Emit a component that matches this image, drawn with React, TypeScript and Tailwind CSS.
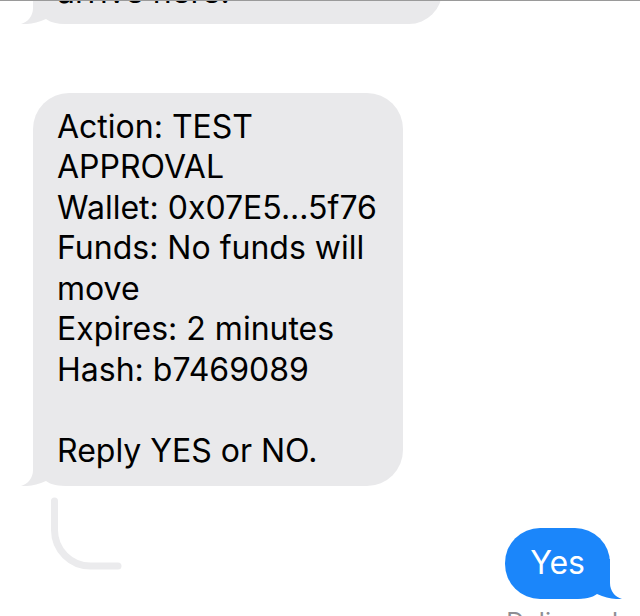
import type { ReactNode } from 'react';

const lines = [
  'Action: TEST',
  'APPROVAL',
  'Wallet: 0x07E5...5f76',
  'Funds: No funds will',
  'move',
  'Expires: 2 minutes',
  'Hash: b7469089',
  '',
  'Reply YES or NO.',
];

function Tail({ color, flip }: { color: string; flip?: boolean }) {
  return (
    <svg
      viewBox="0 0 50 40"
      width={50}
      height={40}
      className={flip ? 'absolute -right-[13px] bottom-0 -scale-x-100' : 'absolute -left-[13px] bottom-0'}
    >
      <path d="M13 0 V24 C13 32 8 38 1 40 C9 40.5 17 39 26 35 C31 39 38 40 50 40 V0 Z" fill={color} />
    </svg>
  );
}

function Received({ children, className }: { children: ReactNode; className?: string }) {
  return (
    <div className={`relative rounded-[36px] bg-[#e9e9eb] pl-6 pr-4 text-[32px] leading-[40.5px] text-black ${className ?? ''}`}>
      <Tail color="#e9e9eb" />
      <div className="relative">{children}</div>
    </div>
  );
}

export default function App() {
  return (
    <div className="flex h-[616px] w-[640px] flex-col overflow-hidden border-t border-[#9a9a9a] bg-white font-['Inter','Noto_Sans',sans-serif]">
      <Received className="-mt-[43px] ml-[33px] w-[409px] pt-[14px] pb-[11px]">
        <div className="whitespace-nowrap">arrive here.</div>
      </Received>

      <div className="relative ml-[33px] mt-[69px] w-[370px]">
        <Received className="pt-[14px] pb-[15px]">
          {lines.map((line, i) => (
            <div key={i} className="h-[40.5px] whitespace-nowrap">
              {line}
            </div>
          ))}
        </Received>
        <svg width={130} height={90} className="absolute left-[-33px] top-full">
          <path
            d="M54.5 15 V44 A36 36 0 0 0 90.5 80 H118"
            fill="none"
            stroke="#ebebed"
            strokeWidth={7}
            strokeLinecap="round"
          />
        </svg>
      </div>

      <div className="relative mr-[30px] mt-[42px] self-end rounded-[35px] bg-[#1b86fa] px-[25px] pt-[15px] pb-[15px] text-[32px] leading-[40.5px] text-white">
        <Tail color="#1b86fa" flip />
        <div className="relative">Yes</div>
      </div>

      <div className="mr-[22px] mt-[8px] self-end text-[25px] leading-[30px] text-[#8e8e93]">Delivered</div>
    </div>
  );
}
